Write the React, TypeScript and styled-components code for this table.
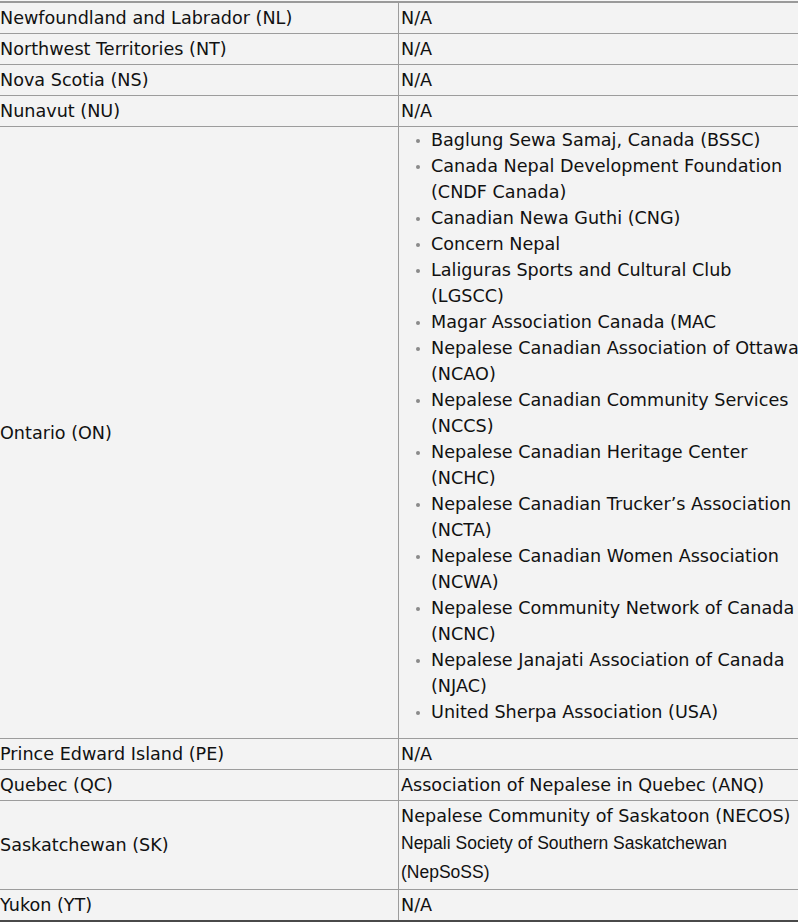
import React from "react";
import styled, { createGlobalStyle } from "styled-components";

const Global = createGlobalStyle`
  html, body { margin: 0; padding: 0; background: #f6f6f6; }
  body { overflow: hidden; }
`;

const Table = styled.table`
  border-collapse: collapse;
  table-layout: fixed;
  width: 806px;
  margin: 1px 0 0 -3px;
  background: #f3f3f3;
  color: #111;
  font-family: "DejaVu Sans", Verdana, sans-serif;
  font-size: 17.6px;
  border-top: 2px solid #9a9a9a;
  border-bottom: 2px solid #4a4a4a;
`;

const Cell = styled.td<{ $first?: boolean; $tight?: boolean }>`
  border: 1px solid #9c9c9c;
  padding: ${(p) => (p.$tight ? "0 2px 2px" : "2px 2px")};
  line-height: 26px;
  vertical-align: middle;
  width: ${(p) => (p.$first ? "396px" : "auto")};
`;

const List = styled.ul`
  list-style: none;
  margin: 0 0 11px 0;
  padding: 0 0 0 30px;
`;

const Item = styled.li`
  position: relative;
  line-height: 26px;
  &::before {
    content: "";
    position: absolute;
    left: -15px;
    top: 12px;
    width: 4px;
    height: 4px;
    border-radius: 50%;
    background: #8a8a8a;
  }
`;

const ArialLine = styled.div`
  font-family: "Liberation Sans", Arial, sans-serif;
  font-size: 17.5px;
  line-height: 29px;
`;

const VerdanaLine = styled.div`
  line-height: 26px;
`;

const ontario = [
  "Baglung Sewa Samaj, Canada (BSSC)",
  "Canada Nepal Development Foundation (CNDF Canada)",
  "Canadian Newa Guthi (CNG)",
  "Concern Nepal",
  "Laliguras Sports and Cultural Club (LGSCC)",
  "Magar Association Canada (MAC",
  "Nepalese Canadian Association of Ottawa (NCAO)",
  "Nepalese Canadian Community Services (NCCS)",
  "Nepalese Canadian Heritage Center (NCHC)",
  "Nepalese Canadian Trucker’s Association (NCTA)",
  "Nepalese Canadian Women Association (NCWA)",
  "Nepalese Community Network of Canada (NCNC)",
  "Nepalese Janajati Association of Canada (NJAC)",
  "United Sherpa Association (USA)",
];

const simpleRows: [string, string][] = [
  ["Newfoundland and Labrador (NL)", "N/A"],
  ["Northwest Territories (NT)", "N/A"],
  ["Nova Scotia (NS)", "N/A"],
  ["Nunavut (NU)", "N/A"],
];

export default function App() {
  return (
    <>
      <Global />
      <Table>
        <tbody>
          {simpleRows.map(([a, b]) => (
            <tr key={a}>
              <Cell $first>{a}</Cell>
              <Cell>{b}</Cell>
            </tr>
          ))}
          <tr>
            <Cell $first>Ontario (ON)</Cell>
            <Cell $tight>
              <List>
                {ontario.map((o) => (
                  <Item key={o}>{o}</Item>
                ))}
              </List>
            </Cell>
          </tr>
          <tr>
            <Cell $first>Prince Edward Island (PE)</Cell>
            <Cell>N/A</Cell>
          </tr>
          <tr>
            <Cell $first>Quebec (QC)</Cell>
            <Cell>Association of Nepalese in Quebec (ANQ)</Cell>
          </tr>
          <tr>
            <Cell $first>Saskatchewan (SK)</Cell>
            <Cell>
              <VerdanaLine>Nepalese Community of Saskatoon (NECOS)</VerdanaLine>
              <ArialLine>Nepali Society of Southern Saskatchewan</ArialLine>
              <ArialLine>(NepSoSS)</ArialLine>
            </Cell>
          </tr>
          <tr>
            <Cell $first>Yukon (YT)</Cell>
            <Cell>N/A</Cell>
          </tr>
        </tbody>
      </Table>
    </>
  );
}
